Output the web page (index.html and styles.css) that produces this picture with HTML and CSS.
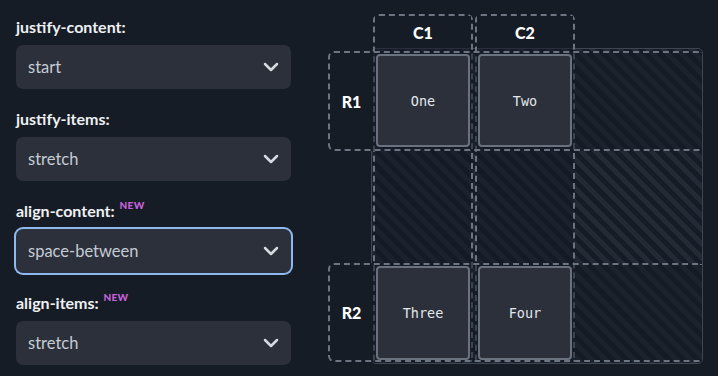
FILE: index.html
```html
<!DOCTYPE html>
<html lang="en">
<head>
    <meta charset="UTF-8">
    <meta name="viewport" content="width=device-width, initial-scale=1.0">
    <title>Grid playground</title>
    <link rel="stylesheet" href="styles.css">
</head>
<body>
    <div class="controls">
        <div class="control">
            <label class="control-label">justify-content:</label>
            <div class="select">
                <span>start</span>
                <svg class="chevron" width="16" height="10" viewBox="0 0 16 10"><path d="M2 2 L8 8 L14 2" fill="none" stroke="#d6dae0" stroke-width="2.5" stroke-linecap="round" stroke-linejoin="round"/></svg>
            </div>
        </div>
        <div class="control">
            <label class="control-label">justify-items:</label>
            <div class="select">
                <span>stretch</span>
                <svg class="chevron" width="16" height="10" viewBox="0 0 16 10"><path d="M2 2 L8 8 L14 2" fill="none" stroke="#d6dae0" stroke-width="2.5" stroke-linecap="round" stroke-linejoin="round"/></svg>
            </div>
        </div>
        <div class="control">
            <label class="control-label">align-content: <sup class="new">NEW</sup></label>
            <div class="select focused">
                <span>space-between</span>
                <svg class="chevron" width="16" height="10" viewBox="0 0 16 10"><path d="M2 2 L8 8 L14 2" fill="none" stroke="#d6dae0" stroke-width="2.5" stroke-linecap="round" stroke-linejoin="round"/></svg>
            </div>
        </div>
        <div class="control">
            <label class="control-label">align-items: <sup class="new">NEW</sup></label>
            <div class="select">
                <span>stretch</span>
                <svg class="chevron" width="16" height="10" viewBox="0 0 16 10"><path d="M2 2 L8 8 L14 2" fill="none" stroke="#d6dae0" stroke-width="2.5" stroke-linecap="round" stroke-linejoin="round"/></svg>
            </div>
        </div>
    </div>

    <div class="stage">
        <div class="grid-box">
            <div class="item">One</div>
            <div class="item">Two</div>
            <div class="item">Three</div>
            <div class="item">Four</div>
        </div>

        <!-- track guides drawn over the grid -->
        <div class="guide col col-1"><span class="guide-label">C1</span></div>
        <div class="guide col col-2"><span class="guide-label">C2</span></div>
        <div class="guide row row-1"><span class="guide-label">R1</span></div>
        <div class="guide row row-2"><span class="guide-label">R2</span></div>
    </div>
</body>
</html>
```

FILE: styles.css
```css
body {
    margin: 0;
    padding: 0;
    background-color: #161c26;
    font-family: Lato, "Open Sans", sans-serif;
    display: flex;
    height: 376px;
    overflow: hidden;
}
.controls {
    width: 275px;
    padding: 16px 0 0 16px;
    display: flex;
    flex-direction: column;
    gap: 19px;
}
.control-label {
    display: block;
    color: #eef0f3;
    font-size: 16px;
    font-weight: bold;
    height: 29px;
    line-height: 22px;
}
.new {
    color: #c862dc;
    font-size: 10px;
    font-weight: 900;
    letter-spacing: 0.3px;
    vertical-align: 8px;
    line-height: 0;
    margin-left: 1px;
}
.select {
    height: 44px;
    box-sizing: border-box;
    background-color: #2b303b;
    border-radius: 7px;
    padding: 0 12px 0 12px;
    display: flex;
    align-items: center;
    justify-content: space-between;
    color: #c6cbd3;
    font-size: 16.5px;
}
.select.focused {
    box-shadow: 0 0 0 2px #8fb8ee;
}
.chevron {
    display: block;
}

.stage {
    position: relative;
    margin: 14px 0 0 37px;
    width: 375px;
    height: 350px;
}
.grid-box {
    position: absolute;
    left: 43px;
    top: 34px;
    width: 332px;
    height: 316px;
    box-sizing: border-box;
    border: 1px solid #3e4652;
    border-radius: 5px;
    padding: 2px 1px 1px 1px;
    display: grid;
    grid-template-columns: 100px 100px;
    grid-template-rows: 98px 99px;
    column-gap: 2px;
    justify-content: start;
    align-content: space-between;
    background: repeating-linear-gradient(45deg, #161c26 0 5px, #222a35 5px 10px);
}
.item {
    margin: 3px 3px 2px 3px;
    border: 2px solid #6a7280;
    border-radius: 4px;
    background-color: #2b303b;
    color: #e4e7eb;
    font-family: "DejaVu Sans Mono", monospace;
    font-size: 13.5px;
    display: flex;
    align-items: center;
    justify-content: center;
    position: relative;
    z-index: 1;
}
.guide {
    position: absolute;
    box-sizing: border-box;
    border: 2px dashed #6d7582;
    color: #ffffff;
    font-weight: 900;
    font-size: 16px;
}
.col {
    top: 0;
    width: 100px;
    height: 348px;
    border-bottom: none;
    border-radius: 6px 6px 0 0;
    background-color: rgba(22, 28, 38, 0.55);
}
.col-1 { left: 45px; }
.col-2 { left: 147px; }
.col .guide-label {
    display: block;
    height: 32px;
    line-height: 34px;
    text-align: center;
    background-color: #161c26;
}
.row {
    left: 0;
    width: 374px;
    border-right: none;
    border-radius: 6px 0 0 6px;
    background: linear-gradient(to right, #161c26 0 43px, rgba(22, 28, 38, 0.55) 43px);
}
.row-1 { top: 37px; height: 100px; }
.row-2 { top: 249px; height: 99px; }
.row .guide-label {
    position: absolute;
    left: 0;
    top: 0;
    bottom: 0;
    width: 43px;
    display: flex;
    align-items: center;
    justify-content: center;
}
```
